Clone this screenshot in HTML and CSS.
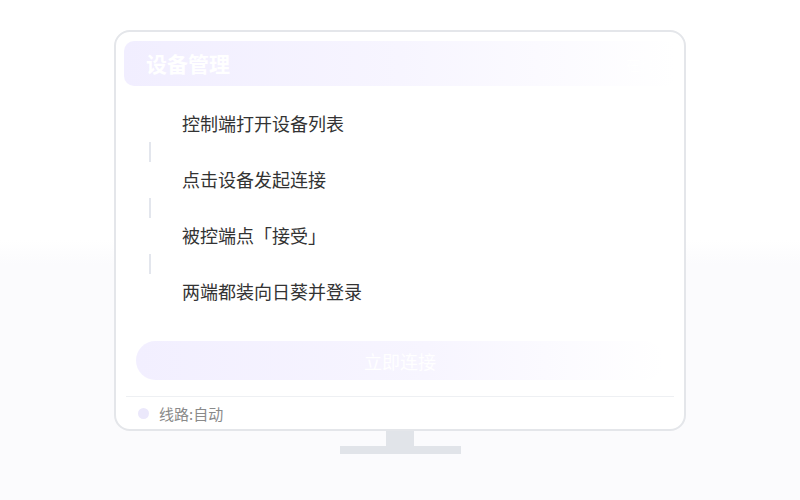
FILE: index.html
```html
<!DOCTYPE html>
<html lang="zh-CN">
<head>
<meta charset="utf-8">
<link rel="stylesheet" href="styles.css">
</head>
<body>
<div class="scene">
  <div class="monitor">
    <div class="header">
      <span class="title">设备管理</span>
      <span class="status">在线</span>
    </div>
    <div class="steps">
      <div class="step">控制端打开设备列表</div>
      <div class="connector"></div>
      <div class="step">点击设备发起连接</div>
      <div class="connector"></div>
      <div class="step">被控端点「接受」</div>
      <div class="connector"></div>
      <div class="step">两端都装向日葵并登录</div>
    </div>
    <div class="btn">立即连接</div>
    <div class="divider"></div>
    <div class="footer">
      <span class="dot"></span>
      <span class="route">线路:自动</span>
    </div>
  </div>
  <div class="neck"></div>
  <div class="base"></div>
</div>
</body>
</html>
```
FILE: styles.css
```css
html, body {
  margin: 0;
  padding: 0;
}
body {
  width: 800px;
  height: 500px;
  background: linear-gradient(to bottom, #ffffff 0, #ffffff 48%, #fbfbfd 53%, #fbfbfd 100%);
  font-family: "Noto Sans CJK SC", "Noto Sans", sans-serif;
}
.scene {
  display: flex;
  flex-direction: column;
  align-items: center;
  padding-top: 30px;
}
.monitor {
  box-sizing: border-box;
  width: 572px;
  height: 401px;
  border: 2px solid #e4e6ea;
  border-radius: 16px;
  background: #fff;
  display: flex;
  flex-direction: column;
  padding: 9px 8px 0 8px;
}
.header {
  height: 45px;
  border-radius: 10px;
  background: linear-gradient(90deg, #f1eeff 0%, #f7f5ff 50%, #ffffff 100%);
  display: flex;
  align-items: center;
  justify-content: space-between;
  padding: 0 22px;
}
.title {
  color: #ffffff;
  font-size: 21px;
  font-weight: 700;
  line-height: 1;
}
.status {
  color: #ffffff;
  font-size: 14px;
}
.steps {
  margin-top: 23px;
  display: flex;
  flex-direction: column;
}
.step {
  height: 28px;
  line-height: 28px;
  font-size: 18px;
  color: #333333;
  padding-left: 58px;
}
.connector {
  width: 2px;
  height: 20px;
  margin: 5px 0 3px 25px;
  background: #e3e6ed;
}
.btn {
  margin: 36px 12px 0 12px;
  height: 39px;
  border-radius: 20px;
  background: linear-gradient(90deg, #f2efff 0%, #f7f5ff 55%, #ffffff 100%);
  color: #ffffff;
  font-size: 18px;
  display: flex;
  align-items: center;
  justify-content: center;
}
.divider {
  margin: 16px 2px 0 2px;
  height: 1px;
  background: #eef0f3;
}
.footer {
  flex: 1;
  display: flex;
  align-items: center;
  padding-left: 14px;
  gap: 10px;
}
.dot {
  width: 11px;
  height: 11px;
  border-radius: 50%;
  background: #ebe8fb;
}
.route {
  font-size: 15px;
  color: #8a8a8a;
}
.neck {
  width: 28px;
  height: 15px;
  background: #e1e4e9;
}
.base {
  width: 121px;
  height: 8px;
  background: #e1e4e9;
}
```
